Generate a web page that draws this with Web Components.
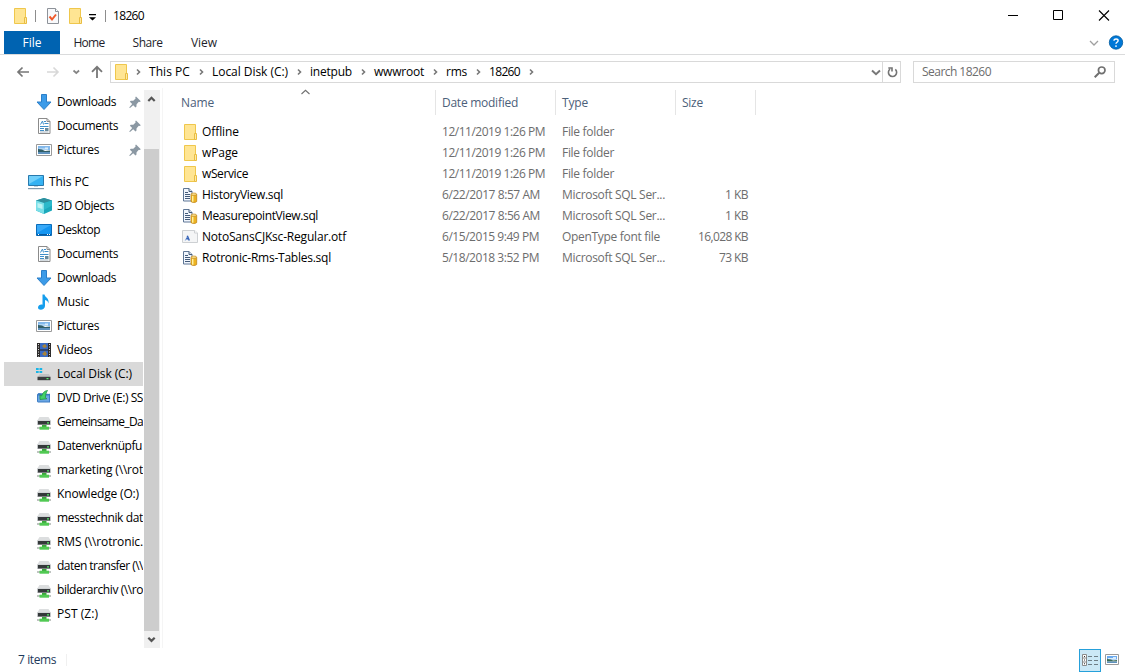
<!DOCTYPE html>
<html lang="en">
<head>
<meta charset="utf-8">
<title>18260</title>
<style>
	body {
		margin: 0;
		width: 1125px;
		height: 672px;
		overflow: hidden;
		background: #fff;
		color: #000;
		font: 12px/16px "Open Sans", "Noto Sans", sans-serif;
	}
</style>
</head>
<body>
<explorer-window></explorer-window>

<template id="explorerWindow">
	<style>
		:host { display: flex; flex-direction: column; width: 1125px; height: 672px; }
		.main { display: flex; height: 560px; }
	</style>
	<title-bar></title-bar>
	<ribbon-tabs></ribbon-tabs>
	<address-row></address-row>
	<div class="main">
		<nav-pane></nav-pane>
		<file-list></file-list>
	</div>
	<status-bar></status-bar>
</template>

<template id="titleBar">
	<style>
		:host { display: flex; height: 31px; box-sizing: border-box; padding-left: 12px; }
		.quick { display: flex; align-items: center; flex: 1; }
		.sep { width: 1px; height: 12px; background: #8d8d8d; }
		.a { margin: 0 9px 0 7px; }
		.b { margin: 0 7px 0 6px; }
		.a + ui-icon { margin-left: -1px; }
		ui-icon + ui-icon { margin-left: 7px; }
		.more { margin-left: 2px !important; width: 14px; }
		.buttons { display: flex; padding-right: 13px; align-items: center; }
		.buttons ui-icon + ui-icon { margin-left: 29px; }
		.buttons ui-icon + .close { margin-left: 30px; }
	</style>
	<div class="quick">
		<ui-icon name="folder"></ui-icon>
		<i class="sep a"></i>
		<ui-icon name="check"></ui-icon>
		<ui-icon name="folder"></ui-icon>
		<ui-icon class="more" name="more"></ui-icon>
		<i class="sep b"></i>
		<fit-text w="31">18260</fit-text>
	</div>
	<div class="buttons">
		<ui-icon name="min"></ui-icon>
		<ui-icon name="max"></ui-icon>
		<ui-icon class="close" name="close"></ui-icon>
	</div>
</template>

<template id="ribbonTabs">
	<style>
		:host { display: flex; height: 24px; box-sizing: border-box; border-bottom: 1px solid #dadbdc; padding-left: 4px; color: #1e1e2b; }
		.tab { display: flex; justify-content: center; align-items: center; width: 58px; }
		.file { width: 56px; background: #0063b1; color: #fff; }
		.share { width: 59px; }
		.view { width: 54px; }
		.end { display: flex; align-items: center; margin-left: auto; gap: 6px; padding-right: 1px; }
	</style>
	<div class="tab file"><fit-text w="19">File</fit-text></div>
	<div class="tab"><fit-text w="31">Home</fit-text></div>
	<div class="tab share"><fit-text w="30">Share</fit-text></div>
	<div class="tab view"><fit-text w="26">View</fit-text></div>
	<div class="end">
		<ui-icon name="collapse"></ui-icon>
		<ui-icon name="help"></ui-icon>
	</div>
</template>

<template id="addressRow">
	<style>
		:host { display: flex; height: 33px; box-sizing: border-box; padding: 6px 10px 5px 15px; }
		.nav { display: flex; align-items: center; width: 95px; }
		.nav ui-icon + ui-icon { margin-left: 14px; }
		.nav .recent { margin-left: 8px !important; }
		.nav .up { margin-left: 4px !important; }
		.box { display: flex; align-items: center; box-sizing: border-box; border: 1px solid #d9d9d9; height: 22px; }
		.path { width: 791px; padding-left: 2px; }
		.drop { margin-left: auto; }
		.refresh { display: flex; align-items: center; height: 20px; width: 17px; border-left: 1px solid #d9d9d9; }
		.search { width: 202px; margin-left: 12px; padding: 0 6px 0 8px; justify-content: space-between; color: #6d6d6d; }
		.folder { margin-right: 1px; }
		.c { margin-right: 3px; }
		path-part { margin-right: 3px; }
	</style>
	<div class="nav">
		<ui-icon name="back"></ui-icon>
		<ui-icon name="forward"></ui-icon>
		<ui-icon class="recent" name="recent"></ui-icon>
		<ui-icon class="up" name="up"></ui-icon>
	</div>
	<div class="box path">
		<ui-icon class="folder" name="folder"></ui-icon>
		<ui-icon class="c" name="crumb"></ui-icon>
		<path-part w="41">This PC</path-part>
		<path-part w="76">Local Disk (C:)</path-part>
		<path-part w="42">inetpub</path-part>
		<path-part w="50">wwwroot</path-part>
		<path-part w="21">rms</path-part>
		<path-part w="31">18260</path-part>
		<ui-icon class="drop" name="drop"></ui-icon>
		<div class="refresh"><ui-icon name="refresh"></ui-icon></div>
	</div>
	<div class="box search">
		<fit-text w="69">Search 18260</fit-text>
		<ui-icon name="search"></ui-icon>
	</div>
</template>

<template id="pathPart">
	<style>
		:host { display: flex; align-items: center; }
		ui-icon { margin-left: 3px; }
	</style>
	<fit-text><slot></slot></fit-text>
	<ui-icon name="crumb"></ui-icon>
</template>

<template id="navPane">
	<style>
		:host { display: flex; width: 163px; height: 560px; box-sizing: border-box; padding: 2px 0 0 4px; border-right: 1px solid #f5f5f5; }
		.tree { width: 139px; margin-right: 1px; overflow: hidden; }
		.bar { display: flex; flex-direction: column; justify-content: space-between; width: 16px; background: #f0f0f0; }
		.thumb { height: 482px; width: 15px; margin-top: 42px; background: #cdcdcd; }
		.bar ui-icon { height: 17px; }
		.root { margin-top: 8px; }
	</style>
	<div class="tree">
		<nav-item icon="down" w="59" pinned>Downloads</nav-item>
		<nav-item icon="doc" w="61" pinned>Documents</nav-item>
		<nav-item icon="pic" w="42" pinned>Pictures</nav-item>
		<nav-item class="root" icon="pc" w="40" root>This PC</nav-item>
		<nav-item icon="cube" w="57">3D Objects</nav-item>
		<nav-item icon="desk" w="43">Desktop</nav-item>
		<nav-item icon="doc" w="61">Documents</nav-item>
		<nav-item icon="down" w="59">Downloads</nav-item>
		<nav-item icon="music" w="32">Music</nav-item>
		<nav-item icon="pic" w="42">Pictures</nav-item>
		<nav-item icon="video" w="35">Videos</nav-item>
		<nav-item icon="disk" w="75" selected>Local Disk (C:)</nav-item>
		<nav-item icon="dvd" w="86">DVD Drive (E:) SS</nav-item>
		<nav-item icon="net" w="86">Gemeinsame_Da</nav-item>
		<nav-item icon="net" w="85">Datenverknüpfu</nav-item>
		<nav-item icon="net" w="86">marketing (\\rot</nav-item>
		<nav-item icon="net" w="82">Knowledge (O:)</nav-item>
		<nav-item icon="net" w="86">messtechnik dat</nav-item>
		<nav-item icon="net" w="86">RMS (\\rotronic.</nav-item>
		<nav-item icon="net" w="86">daten transfer (\\</nav-item>
		<nav-item icon="net" w="86">bilderarchiv (\\ro</nav-item>
		<nav-item icon="net" w="41">PST (Z:)</nav-item>
	</div>
	<div class="bar">
		<ui-icon name="scrollUp"></ui-icon>
		<div class="thumb"></div>
		<ui-icon name="scrollDown"></ui-icon>
	</div>
</template>

<template id="navItem">
	<style>
		:host { display: flex; align-items: center; box-sizing: border-box; height: 24px; padding-left: 32px; white-space: nowrap; }
		:host([root]) { padding-left: 24px; }
		:host([selected]) { background: #d9d9d9; }
		.icon { margin-right: 5px; }
		:host([pinned]) .pin { display: block; margin-left: auto; }
		.pin { display: none; }
	</style>
	<ui-icon class="icon"></ui-icon>
	<fit-text><slot></slot></fit-text>
	<ui-icon class="pin" name="pin"></ui-icon>
</template>

<template id="fileList">
	<style>
		:host { display: block; flex: 1; padding-left: 18px; }
		.head { display: flex; position: relative; height: 25px; padding-top: 2px; margin-bottom: 6px; color: #4c607a; }
		.head div { display: flex; align-items: center; box-sizing: border-box; width: 120px; padding-left: 6px; border-right: 1px solid #e5e5e5; }
		.head .name { width: 255px; padding-left: 0; }
		.head .size { width: 80px; }
		.head .sort { position: absolute; left: 116px; top: -4px; }
	</style>
	<div class="head">
		<div class="name"><fit-text w="33">Name</fit-text></div>
		<div><fit-text w="76">Date modified</fit-text></div>
		<div><fit-text w="26">Type</fit-text></div>
		<div class="size"><fit-text w="21">Size</fit-text></div>
		<ui-icon class="sort" name="sort"></ui-icon>
	</div>
	<div class="rows"></div>
</template>

<template id="fileRow">
	<style>
		:host { display: flex; align-items: center; height: 21px; color: #6d6d6d; }
		.name { display: flex; align-items: center; width: 261px; color: #000; }
		.name ui-icon { margin: 0 4px 0 1px; }
		.cell { width: 120px; }
		.size { display: flex; justify-content: flex-end; width: 66px; }
	</style>
	<div class="name"><ui-icon></ui-icon><fit-text></fit-text></div>
	<div class="cell"><fit-text></fit-text></div>
	<div class="cell"><fit-text></fit-text></div>
	<div class="size"><fit-text></fit-text></div>
</template>

<template id="statusBar">
	<style>
		:host { display: flex; align-items: center; height: 24px; padding-left: 18px; color: #1e395b; }
		.sep { width: 1px; height: 12px; margin-left: 10px; background: #f0f0f0; }
		.views { display: flex; margin-left: auto; margin-right: 5px; align-items: center; gap: 3px; }
		.on { display: flex; align-items: center; justify-content: center; box-sizing: border-box; width: 22px; height: 23px; border: 1px solid #26a0da; background: #cbe8f6; }
	</style>
	<fit-text w="38">7 items</fit-text>
	<i class="sep"></i>
	<div class="views">
		<div class="on"><ui-icon name="details"></ui-icon></div>
		<ui-icon name="thumbs"></ui-icon>
	</div>
</template>

<script>
	// every glyph lives in a 16x16 box
	const icons = {
		folder: `<path d="M2.500.500h11v15h-11z" fill="#ffe593" stroke="#efc74c"/><path d="M12.500 9.500h2v6h-2z" fill="#ffe9a2" stroke="#e9bd42"/>`,
		check: `<path d="M3.500.500h8l3 3v12h-11z" fill="#f8f9fb" stroke="#8d9299"/><path d="M11.500.500v3h3" fill="#fff" stroke="#8d9299"/><path d="M5.500 8.500l2.500 3 4-5" fill="none" stroke="#f0592b" stroke-width="2"/>`,
		more: `<path d="M4 6h7v1.300H4zM4 9.200h7L7.500 12.600z" fill="#000"/>`,
		min: `<path d="M3 7h10v1H3z"/>`,
		max: `<path d="M3.500 2.500h9v9h-9z" fill="none" stroke="#000"/>`,
		close: `<path d="M3 2.500l10 10M13 2.500l-10 10" fill="none" stroke="#000" stroke-width="1.100"/>`,
		collapse: `<path d="M4 6l4 4 4-4" fill="none" stroke="#a0a0a0" stroke-width="1.300"/>`,
		help: `<circle cx="8" cy="7.500" r="6.700" fill="#0078d7" stroke="#005a9e" stroke-width=".8"/><path d="M6 5.800C6 3.300 10.100 3.500 10.100 5.700 10.100 7.300 8 7.300 8 8.800" fill="none" stroke="#fff" stroke-width="1.400"/><circle cx="8" cy="11.100" r=".9" fill="#fff"/>`,
		back: `<path d="M14 8H3M7.500 3.500L3 8l4.500 4.500" fill="none" stroke="#777" stroke-width="1.700"/>`,
		forward: `<path d="M2 8h11M8.500 3.500L13 8l-4.500 4.500" fill="none" stroke="#d8d8d8" stroke-width="1.600"/>`,
		recent: `<path d="M4.500 6.500L7.300 9l2.800-2.500" fill="none" stroke="#858585" stroke-width="1.700"/>`,
		up: `<path d="M8 14V3M3 7.800L8 2.800l5 5" fill="none" stroke="#777" stroke-width="1.800"/>`,
		crumb: `<path d="M7 5.500L9.500 8 7 10.500" fill="none" stroke="#777" stroke-width="1.600"/>`,
		drop: `<path d="M6 6.500l4 3.700 4-3.700" fill="none" stroke="#777" stroke-width="2"/>`,
		refresh: `<path d="M12.300 5.400A4.100 4.100 0 1 1 7 5.200M5.300 4h3.700v3.500" fill="none" stroke="#747474" stroke-width="1.600"/>`,
		search: `<circle cx="9.700" cy="6.300" r="3.300" fill="none" stroke="#707070" stroke-width="1.700"/><path d="M7.200 8.800l-4.500 4.500" stroke="#707070" stroke-width="2"/>`,
		sort: `<path d="M4.500 10L8.500 6.300 12.500 10" fill="none" stroke="#707070" stroke-width="1.100"/>`,
		scrollUp: `<path d="M4.300 11L7.500 7.800l3.200 3.200" fill="none" stroke="#555" stroke-width="2.200"/>`,
		scrollDown: `<path d="M4.300 6.700l3.200 3.200 3.200-3.200" fill="none" stroke="#555" stroke-width="2.200"/>`,
		pin: `<path d="M9 2.500l4.800 4.700-1 .8-1-.2-2.200 2.500-.2 2.500-.9.700-2.300-2.300L3 14l-.8-.4 3-3.700-2.300-2.200.8-.9 2.600-.1 2.300-2.300-.3-1.200z" fill="#8b98a3"/>`,
		down: `<path d="M5.500.500h5V8h4.500L8 15.500 1 8h4.500z" fill="#3c9be8" stroke="#2a7fc9"/>`,
		doc: `<path d="M2.500.500h8.500l3 3v12H2.500z" fill="#fff" stroke="#8b8b8b"/><path d="M11 .500v3h3" fill="none" stroke="#8b8b8b"/><path d="M4.500 6.500l2-3.500 1 3.500M8 3.500h2M8.500 5.500h4M4 8.500h8.500M4 10.500h4M4 12.500h4" fill="none" stroke="#3f8fca"/><path d="M9 10h3.500v3H9z" fill="#688a9d"/><path d="M4 14h8.500" stroke="#a9b8c2"/>`,
		pic: `<path d="M.500 2.500h15v11H.500z" fill="#fff" stroke="#9a9a9a"/><path d="M2 4h12v4H2z" fill="#82b8eb"/><path d="M3 6.500h6v-1h3v2H3z" fill="#d9edfb"/><path d="M2 7l4 .5 3 1.500 5-.5V10H2z" fill="#315e67"/><path d="M2 10h12v2H2z" fill="#5e91bd"/>`,
		thumbs: `<path d="M1.500 2.500h13v10h-13z" fill="#fff" stroke="#9a9a9a"/><path d="M3 4h10v3.500H3z" fill="#6ba9ee"/><path d="M4 6h5v-1h3v2H4z" fill="#d9edfb"/><path d="M3 7l4 .5 2 1 4-.5v1.500H3z" fill="#3b6a52"/><path d="M3 9.500h10V11H3z" fill="#5e91bd"/>`,
		pc: `<path d="M.500 1.500h15v10H.500z" fill="#35b2f3" stroke="#2879ad"/><path d="M1 2h14L1 10z" fill="#70cffa"/><path d="M6 12h4v1H6z" fill="#c3d0da"/><path d="M0 14h16v1.200H0z" fill="#8199ad"/>`,
		cube: `<path d="M8 0l8 2.500v10L8 16 0 12.500v-10z" fill="#1ba9bb"/><path d="M8 0l8 2.500L8 5 0 2.500z" fill="#2f8f9d"/><path d="M0 2.500L8 5v11l-8-3.500z" fill="#79dfe8"/><path d="M1.500 5l5 1.500V11l-5-1.500z" fill="#bdf3f4"/><path d="M8 5l8-2.500v5L8 12z" fill="#2bb9ca"/>`,
		desk: `<path d="M.500 2.500h15v11H.500z" fill="#1495f1" stroke="#0b6dba"/><path d="M1 3h14L1 11z" fill="#38a9f8"/><path d="M1 12h14v1.300H1z" fill="#075aa0"/><path d="M2 12h1v1H2zM11 12h1v1h-1zM13 12h1v1h-1z" fill="#fff"/>`,
		music: `<path d="M6.500.500H8.500c.5 3 5 3.500 4 9-.5-2-1.500-3.200-3.500-3.500V12c0 4.300-7 5-7 1.500C2 10.700 5.500 10 6.500 10.800z" fill="#159eed"/>`,
		video: `<path d="M1 1h14v14H1z" fill="#2d2b2b"/><path d="M4 1h8v14H4z" fill="#396ac3"/><path d="M4 7.500h8v1H4z" fill="#222"/><path d="M6 4l3-2 2 3-3 1zM6 12l3-3 2 3-2 2z" fill="#a98337"/><path d="M2.500 2v13M13.500 2v13" stroke="#ddd" stroke-dasharray="1 1.500"/>`,
		disk: `<path d="M0 2h2.700v2H0zM3.500 2h2.700v2H3.500zM0 5h2.700v2H0zM3.500 5h2.700v2H3.500z" fill="#18b6e8"/><path d="M4 8h9l1.500 3h-13z" fill="#c0c2c4"/><path d="M1.500 10.800h13v3.400h-13z" fill="#3a3d3f"/><path d="M10.500 12h2v1.200h-2z" fill="#58ee6d"/>`,
		dvd: `<path d="M1 4.500l1.500-1.500 11 1L14 3v9.500H2l-1-1z" fill="#3c7cc4"/><path d="M2 5.500h11v6H2z" fill="#6aa6e4"/><path d="M4 9.500V4.800l1.500 1.200C6.500 3 8.500.800 11.500.500 10 2.500 9.800 4.800 9.300 7.500l1.500 1.300z" fill="#43d267" stroke="#168d39" stroke-width=".7"/>`,
		net: `<path d="M3.500 3h9L15 7H1z" fill="#dcdedf"/><path d="M1 6.500h14V11H1z" fill="#c3c6c8"/><path d="M2 7h12v3.500H2z" fill="#34383a"/><path d="M11 8.200h2v1.300h-2z" fill="#55ec69"/><path d="M6 11h4.500v2H6z" fill="#3aa83c"/><path d="M1 13h14v2H1z" fill="#bfc4c1"/><path d="M3.500 12.700h9.500v3H3.500z" fill="#51c953"/>`,
		sql: `<path d="M1.500 1.500h5.500l3 3v9.500H1.500z" fill="#f1f6fd" stroke="#5f7796"/><path d="M7 1.500v3h3" fill="#d4e0ee" stroke="#435a79"/><path d="M3 5.500h3M3 7.500h5M3 9.500h5M3 11.500h5" fill="none" stroke="#435a79"/><path d="M9 7.500v7c1 1.300 4.700 1.300 5.700 0v-7z" fill="#edb321" stroke="#b87b10" stroke-width=".7"/><path d="M10.700 8.500v6.200" stroke="#fff0a0" stroke-width="1.500"/><ellipse cx="11.850" cy="7.200" rx="2.850" ry="1.200" fill="#fbe08a" stroke="#b87b10" stroke-width=".6"/>`,
		font: `<path d="M.500 1.500h12l3 2.500v9.500H.500z" fill="#f4f5f6" stroke="#cdd0d3"/><path d="M12.500 1.500V4h3" fill="#fff" stroke="#cdd0d3"/><path d="M3.300 11.500L5.700 7" fill="none" stroke="#7ba0da"/><path d="M5.300 6.800l2 4.700M4.300 9.800h2.500" fill="none" stroke="#3563b8" stroke-width="1.500"/>`,
		details: `<path d="M.500 2.500h4v11h-4zM.500 6h4M.500 10h4" fill="#fff" stroke="#8a8a8a"/><path d="M2 4h1v1H2zM2 7.500h1v1H2zM2 11.300h1v1H2z" fill="#333"/><path d="M6 4.500h4M12 4.500h4M6 8.500h4M12 8.500h4M6 12.500h4M12 12.500h4" stroke="#6e7e86"/>`
	};

	const files = [
		['folder', 'Offline', 37, '12/11/2019 1:26 PM', 103, 'File folder', 52],
		['folder', 'wPage', 36, '12/11/2019 1:26 PM', 103, 'File folder', 52],
		['folder', 'wService', 46, '12/11/2019 1:26 PM', 103, 'File folder', 52],
		['sql', 'HistoryView.sql', 81, '6/22/2017 8:57 AM', 98, 'Microsoft SQL Ser...', 103, '1 KB', 23],
		['sql', 'MeasurepointView.sql', 116, '6/22/2017 8:56 AM', 98, 'Microsoft SQL Ser...', 103, '1 KB', 23],
		['font', 'NotoSansCJKsc-Regular.otf', 144, '6/15/2015 9:49 PM', 97, 'OpenType font file', 98, '16,028 KB', 50],
		['sql', 'Rotronic-Rms-Tables.sql', 129, '5/18/2018 3:52 PM', 97, 'Microsoft SQL Ser...', 103, '73 KB', 29]
	];

	class BaseElement extends HTMLElement {
		constructor() {
			super();
			this.attachShadow({ mode: 'open' });
		}
		stamp(tpl) {
			this.shadowRoot.append(tpl.content.cloneNode(true));
		}
		$(sel) {
			return this.shadowRoot.querySelector(sel);
		}
	}

	customElements.define('ui-icon', class extends BaseElement {
		connectedCallback() {
			this.shadowRoot.innerHTML = `
				<style>
					:host { display: block; flex: none; width: 16px; height: 16px; }
					svg { display: block; overflow: visible; }
				</style>
				<svg width="16" height="16" viewBox="0 0 16 16">${icons[this.getAttribute('name')] || ''}</svg>`;
		}
	});

	// label that tracks its letters to the width given in w
	customElements.define('fit-text', class extends BaseElement {
		connectedCallback() {
			this.shadowRoot.innerHTML = `
				<style>
					:host { display: block; flex: none; white-space: nowrap; }
					span { display: inline-block; }
				</style>
				<span><slot></slot></span>`;
			this.fit();
		}
		fit() {
			const w = Number(this.getAttribute('w'));
			const slot = this.$('slot');
			const text = slot.assignedNodes({ flatten: true }).map(n => n.textContent).join('');
			const span = this.$('span');
			if (!w || !text) return;
			span.style.letterSpacing = '0';
			span.style.letterSpacing = (w - span.getBoundingClientRect().width) / text.length + 'px';
			this.style.width = w + 'px';
		}
	});

	customElements.define('path-part', class extends BaseElement {
		connectedCallback() {
			this.stamp(pathPart);
			const label = this.$('fit-text');
			label.setAttribute('w', this.getAttribute('w'));
			label.fit();
		}
	});

	customElements.define('nav-item', class extends BaseElement {
		connectedCallback() {
			const part = navItem.content.cloneNode(true);
			part.querySelector('.icon').setAttribute('name', this.getAttribute('icon'));
			part.querySelector('fit-text').setAttribute('w', this.getAttribute('w'));
			this.shadowRoot.append(part);
		}
	});

	customElements.define('file-row', class extends BaseElement {
		connectedCallback() {
			const [icon, ...cells] = this.file;
			const part = fileRow.content.cloneNode(true);
			part.querySelector('ui-icon').setAttribute('name', icon);
			part.querySelectorAll('fit-text').forEach((el, i) => {
				el.textContent = cells[i * 2] || '';
				el.setAttribute('w', cells[i * 2 + 1] || 0);
			});
			this.shadowRoot.append(part);
		}
	});

	customElements.define('file-list', class extends BaseElement {
		connectedCallback() {
			this.stamp(fileList);
			for (const file of files) {
				const row = document.createElement('file-row');
				row.file = file;
				this.$('.rows').append(row);
			}
		}
	});

	const plain = {
		'title-bar': titleBar,
		'ribbon-tabs': ribbonTabs,
		'address-row': addressRow,
		'nav-pane': navPane,
		'status-bar': statusBar,
		'explorer-window': explorerWindow
	};
	for (const [tag, tpl] of Object.entries(plain)) {
		customElements.define(tag, class extends BaseElement {
			connectedCallback() {
				this.stamp(tpl);
			}
		});
	}
</script>
</body>
</html>
